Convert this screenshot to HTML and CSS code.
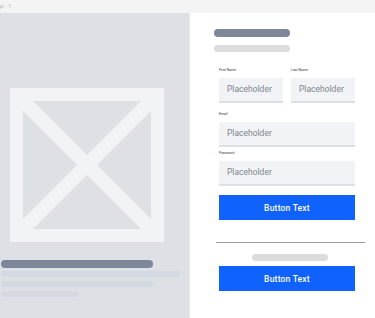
FILE: index.html
```html
<!DOCTYPE html>
<html lang="en">
<head>
  <meta charset="UTF-8" />
  <meta name="viewport" content="width=device-width, initial-scale=1.0" />
  <title>Sign up</title>
  <link rel="stylesheet" href="styles.css">
</head>
<body>

  <div class="topbar">p - 1</div>

  <div class="layout">
    <aside class="media">
      <svg class="media-img" width="154" height="154" viewBox="0 0 154 154">
        <rect x="0" y="0" width="154" height="154" fill="#dde0e5" />
        <line x1="13" y1="13" x2="141" y2="141" stroke="#f2f3f7" stroke-width="14" />
        <line x1="141" y1="13" x2="13" y2="141" stroke="#f2f3f7" stroke-width="14" />
        <rect x="6.5" y="6.5" width="141" height="141" fill="none" stroke="#f2f3f7" stroke-width="13" />
      </svg>
      <div class="media-bars">
        <span class="bar bar-dark"></span>
        <span class="bar bar-light bar-full"></span>
        <span class="bar bar-light bar-mid"></span>
        <span class="bar bar-light bar-short"></span>
      </div>
    </aside>

    <main class="form">
      <span class="pill pill-title"></span>
      <span class="pill pill-sub"></span>

      <div class="row">
        <div class="field">
          <label class="field-label">First Name</label>
          <div class="input">Placeholder</div>
        </div>
        <div class="field">
          <label class="field-label">Last Name</label>
          <div class="input">Placeholder</div>
        </div>
      </div>

      <div class="field field-email">
        <label class="field-label">Email</label>
        <div class="input">Placeholder</div>
      </div>

      <div class="field field-pass">
        <label class="field-label">Password</label>
        <div class="input">Placeholder</div>
      </div>

      <button class="btn btn-first">Button Text</button>

      <hr class="divider" />

      <span class="pill pill-alt"></span>

      <button class="btn btn-second">Button Text</button>
    </main>
  </div>

</body>
</html>
```

FILE: styles.css
```css
* {
  box-sizing: border-box;
  margin: 0;
  padding: 0;
}

body {
  font-family: Roboto, "Liberation Sans", sans-serif;
  background: #ffffff;
  width: 375px;
  height: 318px;
  overflow: hidden;
}

.topbar {
  height: 13px;
  background: #f4f4f4;
  color: #b4b4b4;
  font-size: 6px;
  line-height: 11px;
}

.layout {
  display: flex;
  height: 305px;
}

/* left picture column */
.media {
  width: 190px;
  background: #dde0e5;
  border-right: 1px solid #e6e8ec;
  display: flex;
  flex-direction: column;
}

.media-img {
  display: block;
  margin: 75px 0 0 10px;
}

.media-bars {
  margin-top: 18px;
  padding-left: 1px;
  display: flex;
  flex-direction: column;
}

.bar {
  display: block;
  border-radius: 4px;
}

.bar-dark {
  width: 152px;
  height: 8px;
  background: #7d8799;
}

.bar-light {
  height: 6px;
  background: #d3d9e1;
  border-radius: 3px;
  margin-top: 3px;
}

.bar-full { width: 179px; }
.bar-mid { width: 152px; margin-top: 4px; }
.bar-short { width: 78px; margin-top: 4px; }

/* right form column */
.form {
  flex: 1;
  padding: 16px 0 0 29px;
  display: flex;
  flex-direction: column;
  align-items: flex-start;
}

.pill {
  display: block;
  width: 76px;
  border-radius: 4px;
}

.pill-title {
  height: 8px;
  background: #7d8799;
  margin-left: -5px;
}

.pill-sub {
  height: 7px;
  background: #dcdcdc;
  margin: 8px 0 0 -5px;
}

.row {
  display: flex;
  gap: 8px;
  margin-top: 15px;
}

.row .field {
  width: 64px;
}

.field {
  width: 136px;
  display: flex;
  flex-direction: column;
}

.field-email {
  margin-top: 8px;
}

.field-pass {
  margin-top: 3px;
}

.field-label {
  font-size: 3.5px;
  line-height: 7px;
  color: #3a3a3a;
  margin-bottom: 4px;
}

.input {
  height: 25px;
  background: #f2f3f7;
  border-bottom: 2px solid #dcdfe4;
  color: #80858d;
  font-size: 8.5px;
  line-height: 23px;
  padding-left: 8px;
}

.btn {
  width: 136px;
  height: 25px;
  border: none;
  background: #0f62fe;
  color: #ffffff;
  font-family: Roboto, "Liberation Sans", sans-serif;
  font-size: 8.5px;
  font-weight: 500;
  letter-spacing: 0.2px;
}

.btn-first {
  margin-top: 9px;
}

.divider {
  width: 149px;
  margin: 22px 0 0 -3px;
  border: none;
  border-top: 1px solid #9a9a9a;
}

.pill-alt {
  height: 7px;
  background: #dcdcdc;
  margin: 11px 0 0 33px;
}

.btn-second {
  margin-top: 5px;
}
```
